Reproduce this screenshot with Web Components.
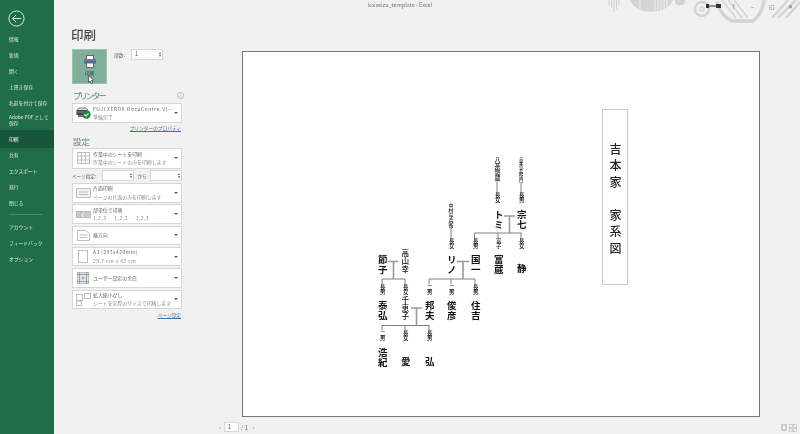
<!DOCTYPE html>
<html lang="ja">
<head>
<meta charset="utf-8">
<title>kaiseizu_template - Excel</title>
<style>
html, body { margin: 0; padding: 0; height: 100%; overflow: hidden; }
body { font-family: "Noto Sans CJK JP", "Noto Sans", sans-serif; background: #f0f1f0; }
</style>
</head>
<body>
<excel-backstage>
  <back-nav slot="nav">
    <nav-item>情報</nav-item>
    <nav-item>新規</nav-item>
    <nav-item>開く</nav-item>
    <nav-item>上書き保存</nav-item>
    <nav-item>名前を付けて保存</nav-item>
    <nav-item tall>Adobe PDF として<br>保存</nav-item>
    <nav-item active>印刷</nav-item>
    <nav-item>共有</nav-item>
    <nav-item>エクスポート</nav-item>
    <nav-item>発行</nav-item>
    <nav-item>閉じる</nav-item>
    <nav-sep></nav-sep>
    <nav-item>アカウント</nav-item>
    <nav-item>フィードバック</nav-item>
    <nav-item>オプション</nav-item>
  </back-nav>
  <print-panel slot="panel">
    <drop-row style="height:20px">
      <svg slot="icon" width="15" height="12" viewBox="0 0 15 12"><path d="M1 3l2-2h7l2 2" fill="#ddd" stroke="#555" stroke-width=".7"/><rect x="0.5" y="3" width="11" height="5" fill="#444"/><path d="M1 5h10" stroke="#bbb" stroke-width=".6"/><rect x="2" y="8" width="8" height="2" fill="#777"/><circle cx="10.5" cy="7.5" r="4.2" fill="#1f8a3f"/><path d="M8.5 7.5l1.5 1.5L12.5 6.3" fill="none" stroke="#fff" stroke-width="1.1"/></svg>
      <span slot="main" style="letter-spacing:.6px">FUJI XEROX DocuCentre-VI…</span>
      <span slot="sub">準備完了</span>
    </drop-row>
  </print-panel>
  <print-preview slot="preview"></print-preview>
</excel-backstage>

<script>
"use strict"

const FONT = '"Noto Sans CJK JP", "Noto Sans", sans-serif';

class ExcelBackstage extends HTMLElement {
 constructor() {
  super();
  this.attachShadow({ mode: 'open' }).innerHTML = `
   <style>
    :host { display: flex; width: 800px; height: 434px; position: relative; overflow: hidden; background: #f0f1f0; font-family: ${FONT}; filter: blur(.3px); }
    .title { position: absolute; left: 0; right: 0; top: 1px; padding-left: 0; text-align: center; font-size: 5.5px; line-height: 8px; color: #777; }
    .art { position: absolute; left: 600px; top: 0; }
    .win { position: absolute; top: 2px; right: 0; display: flex; align-items: center; height: 8px; font-size: 6px; color: #666; }
    .win span { width: 19px; text-align: center; }
   </style>
   <svg class="art" width="200" height="26" viewBox="600 0 200 26" fill="none" stroke="#d3d4d3">
    <g stroke-width="1.2"><path d="M609 0v5M611.5 0v8M614 0v12M616.5 0v9M619 0v5"/></g>
    <path d="M630 0h43a22 15 0 0 1-43 0z" fill="#d3d4d3" stroke="none"/>
    <g stroke="#f0f1f0" stroke-width="1"><path d="M640 0v14M655 0v15M658 0v14M661 0v13M664 0v12M667 0v9"/></g>
    <circle cx="680" cy="0" r="5.5" fill="#d3d4d3" stroke="none"/>
    <circle cx="702" cy="9" r="7" stroke-width="2.4"/>
    <circle cx="702" cy="9" r="2" stroke-width="1.5"/>
    <path d="M717 2q4 14 15 19h21q9-6 11-21" stroke-width="3.5"/>
    <path d="M722 0l14 18M728 0l14 18M734 0l14 18" stroke-width="1.5"/>
    <path d="M772 18L788 0M778 18L796 0M786 18L800 2" stroke-width="2.4"/>
   </svg>
   <div class="title">kaiseizu_template  -  Excel</div>
   <svg style="position:absolute;left:705px;top:3px" width="18" height="6" viewBox="0 0 18 6"><rect x="1" y="1" width="3" height="4" fill="#333"/><path d="M4 3h8" stroke="#333"/><rect x="11" y="1" width="5" height="4" fill="#333"/></svg>
   <div class="win"><span>?</span><span>–</span><span>◱</span><span>✕</span></div>
   <slot name="nav"></slot>
   <slot name="panel"></slot>
   <slot name="preview"></slot>`;
 }
}

class BackNav extends HTMLElement {
 constructor() {
  super();
  this.attachShadow({ mode: 'open' }).innerHTML = `
   <style>
    :host { display: flex; flex-direction: column; width: 54px; flex: none; height: 434px; background: #1f6e49; color: #e2eee8; }
    .back { height: 31px; padding: 7.5px 0 0 7.5px; box-sizing: border-box; flex: none; }
   </style>
   <div class="back">
    <svg width="17" height="17" viewBox="0 0 17 17" fill="none" stroke="#d8e8df" stroke-width="1"><circle cx="8.5" cy="8.5" r="7.6"/><path d="M13 8.5H4.5M8 5L4.5 8.5 8 12"/></svg>
   </div>
   <slot></slot>`;
 }
}

class NavItem extends HTMLElement {
 constructor() {
  super();
  this.attachShadow({ mode: 'open' }).innerHTML = `
   <style>
    :host { display: flex; align-items: center; height: 16px; flex: none; padding-left: 9px; font-size: 4.8px; line-height: 6.5px; white-space: nowrap; color: #dfece5; }
    :host([tall]) { height: 20px; margin-top: -1px; margin-bottom: 1px; }
    :host([active]) { height: 18px; margin-top: -1px; margin-bottom: -1px; background: #17563a; color: #fff; }
   </style>
   <span><slot></slot></span>`;
 }
}

class NavSep extends HTMLElement {
 constructor() {
  super();
  this.attachShadow({ mode: 'open' }).innerHTML = `
   <style>
    :host { display: block; height: 1px; flex: none; margin: 3px 11px 4px 9px; background: #4b8b6c; }
   </style>`;
 }
}

class DropRow extends HTMLElement {
 constructor() {
  super();
  this.attachShadow({ mode: 'open' }).innerHTML = `
   <style>
    :host { display: flex; align-items: center; width: 110px; height: 20px; box-sizing: border-box; flex: none; background: #fff; border: 1px solid #d6d8d6; color: #666; font-size: 4.9px; line-height: 8.5px; white-space: nowrap; }
    .icon { width: 20px; display: flex; justify-content: center; flex: none; }
    .text { flex: 1; min-width: 0; overflow: hidden; display: flex; flex-direction: column; }
    .sub { color: #8a8a8a; }
    .arrow { width: 0; height: 0; margin: 0 3px 0 2px; flex: none; border: 2px solid transparent; border-top: 2.5px solid #555; border-bottom: 0; }
   </style>
   <div class="icon"><slot name="icon"></slot></div>
   <div class="text"><div><slot name="main"></slot></div><div class="sub"><slot name="sub"></slot></div></div>
   <div class="arrow"></div>`;
 }
}

class SpinBox extends HTMLElement {
 constructor() {
  super();
  this.attachShadow({ mode: 'open' }).innerHTML = `
   <style>
    :host { display: flex; align-items: center; justify-content: space-between; box-sizing: border-box; height: 11px; background: #fff; border: 1px solid #d6d8d6; padding: 0 1px 0 3px; font-size: 5.5px; color: #555; }
    .sp { display: flex; flex-direction: column; gap: 1px; }
    .sp i { display: block; width: 0; height: 0; border: 1.5px solid transparent; }
    .u { border-bottom: 2px solid #555 !important; border-top: 0 !important; }
    .d { border-top: 2px solid #555 !important; border-bottom: 0 !important; }
   </style>
   <span><slot></slot></span>
   <div class="sp"><i class="u"></i><i class="d"></i></div>`;
 }
}

class PrintPanel extends HTMLElement {
 constructor() {
  super();
  this.attachShadow({ mode: 'open' }).innerHTML = `
   <style>
    :host { display: block; width: 110px; flex: none; margin-left: 18px; color: #555; }
    h1 { font: 500 12.5px/20px ${FONT}; margin: 25px 0 4px -1px; color: #444; height: 20px; }
    .top { display: flex; height: 35px; }
    .btn { width: 35px; height: 35px; box-sizing: border-box; background: #80b09b; border: 1px solid #9cc3b2; display: flex; flex-direction: column; align-items: center; padding-top: 5px; position: relative; font-size: 4.7px; color: #244; line-height: 7px; }
    .btn svg.c { position: absolute; left: 15px; top: 25px; }
    .copies { display: flex; align-items: flex-start; margin-left: 7px; gap: 3px; font-size: 4.8px; line-height: 11px; color: #666; }
    .copies span { width: 14px; }
    spin-box { width: 32px; }
    h2 { font: 400 8.5px/13px ${FONT}; margin: 0; color: #5a8a75; display: flex; justify-content: space-between; align-items: center; height: 13px; padding-left: 1px; }
    h2 .i { width: 5px; height: 5px; border: 1px solid #bbb; border-radius: 50%; font: 4px/5px "Liberation Sans", sans-serif; color: #999; text-align: center; margin-right: -2px; }
    .link { text-align: right; font-size: 4.7px; line-height: 8px; color: #3f72a8; text-decoration: underline; height: 8px; padding-right: 1px; }
    .stack { display: flex; flex-direction: column; gap: 1.8px; }
    .range { display: flex; align-items: center; height: 11px; font-size: 4.6px; color: #666; white-space: nowrap; }
    .range spin-box { width: 32px; flex: none; }
   </style>
   <h1>印刷</h1>
   <div class="top">
    <div class="btn">
     <svg width="14" height="13" viewBox="0 0 14 13"><rect x="3.5" y="0.5" width="7" height="4" fill="#fff" stroke="#667"/><rect x="1" y="4" width="12" height="5" fill="#6d7d8d"/><rect x="1" y="6" width="12" height="1.4" fill="#3a6ea8"/><rect x="3.5" y="8" width="7" height="4.5" fill="#fff" stroke="#667"/></svg>
     <div style="margin-top:2px">印刷</div>
     <svg class="c" width="6" height="9" viewBox="0 0 6 9"><path d="M.5.5v7l1.7-1.5L3.4 8.5 4.6 8 3.5 5.3 5.6 5z" fill="#fff" stroke="#222" stroke-width=".6"/></svg>
    </div>
    <div class="copies"><span>部数:</span><spin-box>1</spin-box></div>
   </div>
   <h2 style="margin-top:5px"><span style="letter-spacing:-2.2px">プリンター</span><span class="i">i</span></h2>
   <div style="margin-top:1px"><slot></slot></div>
   <div class="link" style="margin-top:1px">プリンターのプロパティ</div>
   <h2 style="margin-top:3px">設定</h2>
   <div class="stack" id="settings"></div>
   <div class="link" style="margin-top:1.5px">ページ設定</div>`;
 }
 connectedCallback() {
  const stroke = 'fill="none" stroke="#aab0ac" stroke-width=".8"';
  const rows = [
   [`<svg width="13" height="12" viewBox="0 0 13 12" ${stroke}><path d="M.5 .5h12v11H.5zM.5 4h12M.5 8h12M4.5.5v11M8.5.5v11"/></svg>`, '作業中のシートを印刷', '作業中のシートのみを印刷します', 20.5],
   null,
   [`<svg width="15" height="12" viewBox="0 0 15 12" ${stroke}><rect x=".5" y="1.5" width="14" height="9" rx=".5" fill="#f2f2f2"/><path d="M3 5h9M3 7.5h9"/></svg>`, '片面印刷', 'ページの片面のみを印刷します', 19.5],
   [`<svg width="15" height="10" viewBox="0 0 17 10" ${stroke}><rect x=".5" y="2" width="7" height="7" fill="#ccc"/><rect x="5" y="3" width="6" height="6" fill="#ddd"/><rect x="10" y="2" width="6.5" height="7" fill="#ccc"/></svg>`, '部単位で印刷', '<span style="letter-spacing:.5px">1,2,3&nbsp;&nbsp;&nbsp;&nbsp;&nbsp;1,2,3&nbsp;&nbsp;&nbsp;&nbsp;&nbsp;1,2,3</span>', 19.5],
   [`<svg width="13" height="11" viewBox="0 0 13 11" ${stroke}><path d="M.5.5h8l4 3v7H.5zM2.5 5h8M2.5 7.5h8"/></svg>`, '横方向', '', 19.5],
   [`<svg width="10" height="13" viewBox="0 0 10 13" ${stroke}><rect x=".5" y=".5" width="9" height="12" fill="#fff"/></svg>`, '<span style="letter-spacing:.5px">A3 (297x420mm)</span>', '<span style="letter-spacing:.5px">29.7 cm x 42 cm</span>', 19.5],
   [`<svg width="12" height="12" viewBox="0 0 12 12" ${stroke}><rect x=".5" y=".5" width="11" height="11" fill="#dfe6ee"/><path d="M2.5 0v12M9.5 0v12M0 2.5h12M0 9.5h12" stroke="#7f93a8"/><path d="M6 4l.7 1.5L8.2 6l-1.5.7L6 8.2l-.7-1.5L3.8 6l1.5-.5z" fill="#e8a33a" stroke="none"/></svg>`, 'ユーザー設定の余白', '', 19.5],
   [`<svg width="15" height="13" viewBox="0 0 15 13" ${stroke}><rect x=".5" y="1.5" width="6" height="6"/><rect x="8.5" y=".5" width="6" height="5"/><rect x=".5" y="8" width="5" height="4.5"/></svg>`, '拡大縮小なし', 'シートを実際のサイズで印刷します', 19.5]
  ];
  const box = this.shadowRoot.getElementById('settings');
  for (const r of rows) {
   if (!r) {
    const range = document.createElement('div');
    range.className = 'range';
    range.innerHTML = '<span style="width:30px">ページ指定:</span><spin-box></spin-box><span style="width:16px;text-align:center">から</span><spin-box></spin-box>';
    box.appendChild(range);
    continue;
   }
   const row = document.createElement('drop-row');
   row.style.height = r[3] + 'px';
   row.innerHTML = `<span slot="icon" style="display:flex">${r[0]}</span><span slot="main">${r[1]}</span>` + (r[2] ? `<span slot="sub">${r[2]}</span>` : '');
   box.appendChild(row);
  }
 }
}

class PrintPreview extends HTMLElement {
 constructor() {
  super();
  this.attachShadow({ mode: 'open' }).innerHTML = `
   <style>
    :host { display: flex; flex-direction: column; flex: 1; min-width: 0; padding: 51px 40px 0 60px; box-sizing: border-box; height: 434px; }
    .pager { display: flex; align-items: center; height: 11px; margin: 4.5px 0 0 -23px; font-size: 6px; color: #777; }
    .pager .box { width: 15px; height: 10px; box-sizing: border-box; margin: 0 2px 0 3px; background: #fff; border: 1px solid #d6d8d6; padding-left: 3px; line-height: 8px; color: #555; }
    .zoom { position: absolute; right: 3px; top: 424px; display: flex; gap: 2px; }
   </style>
   <family-sheet></family-sheet>
   <div class="pager"><span>‹</span><span class="box">1</span><span>/ 1</span><span style="margin-left:5px">›</span></div>
   <div class="zoom">
    <svg width="6" height="7" viewBox="0 0 6 7"><rect width="6" height="7" fill="#c5ccd3"/><rect x="2" y="2" width="2" height="3" fill="#fff"/></svg>
    <svg width="8" height="8" viewBox="0 0 8 8"><rect width="8" height="8" fill="#ccc"/><path d="M1 1l2 2M7 1L5 3M1 7l2-2M7 7L5 5" stroke="#fff" stroke-width="1.2"/></svg>
   </div>`;
 }
}

// nodes of the family tree, in screenshot coordinates: x centre, y top, font px, height, text, bold
const PAGE_X = 242, PAGE_Y = 51;
const TREE_NODES = [
 [521, 157, 4.2, 25, '吉本宗兵衛門'], [497, 157, 6, 24, '八茶惣蔵'], [451, 203, 5, 25, '中村与兵衛'],
 [521, 192, 5.4, 11, '長男'], [497, 192, 5.4, 11, '長女'], [451, 238, 5.4, 11, '長女'],
 [521, 210, 9.5, 19, '宗七', 1], [498, 210, 9.5, 19, 'トミ', 1],
 [475, 238, 5.4, 11, '長男'], [498, 238, 5.4, 11, '富子'], [521, 238, 5.4, 11, '長女'],
 [451, 255, 9.5, 19, 'リノ', 1], [475, 255, 9.5, 19, '国一', 1], [498, 255, 9.5, 19, '富蔵', 1], [521, 264, 9.5, 9.5, '静', 1],
 [382, 255, 9.5, 19, '節子', 1], [405, 249, 7.6, 24, '高山幸'],
 [382, 284, 5.4, 11, '長男'], [405, 284, 5.4, 11, '長女'], [429, 284, 5.4, 11, '二男'], [451, 284, 5.4, 11, '二男'], [475, 284, 5.4, 11, '長男'],
 [382, 301, 9.5, 19, '泰弘', 1], [405, 296, 7.6, 24, '千恵子'], [429, 301, 9.5, 19, '邦夫', 1], [451, 301, 9.5, 19, '俊彦', 1], [475, 301, 9.5, 19, '住吉', 1],
 [382, 330, 5.4, 11, '二男'], [405, 330, 5.4, 11, '長女'], [429, 330, 5.4, 11, '長男'],
 [382, 348, 9.5, 19, '浩紀', 1], [405, 357, 9.5, 9.5, '愛', 1], [429, 357, 9.5, 9.5, '弘', 1]
];
const TREE_BRANCHES = [
 'M521 182v10M497 182v10M451 228v10',
 'M474.5 233h47M474.5 233v5M498 233v5M521 233v5',
 'M429 279h46M429 279v5M451 279v5M475 279v5',
 'M382 279h23M382 279v5M405 279v5',
 'M382 325.5h47M382 325v5M405 325v5M429 325v5'
];
const TREE_COUPLES = [
 'M504 216h11M509.5 216v17',
 'M457 261.5h12M463 261.5v17.5',
 'M388 261.5h10M393.5 261.5v17.5',
 'M411 308h11M416.5 308v17'
];

class FamilySheet extends HTMLElement {
 constructor() {
  super();
  const nodes = TREE_NODES.map(([x, y, fs, h, t, b]) => {
   const spacing = Math.max(0, (h - fs * t.length) / t.length);
   return `<span class="n" style="left:${x - PAGE_X - 1 - fs / 2}px;top:${y - PAGE_Y - 1}px;font-size:${fs}px;letter-spacing:${spacing.toFixed(2)}px;font-weight:${b ? 700 : 500}">${t}</span>`;
  }).join('');
  this.attachShadow({ mode: 'open' }).innerHTML = `
   <style>
    :host { display: block; position: relative; width: 518px; height: 366px; box-sizing: border-box; background: #fff; border: 1px solid #777; flex: none; font-family: ${FONT}; color: #111; }
    .n { position: absolute; writing-mode: vertical-rl; text-orientation: upright; line-height: 1; white-space: nowrap; }
    .cap { position: absolute; left: ${602 - PAGE_X - 1}px; top: ${109 - PAGE_Y - 1}px; width: 26px; height: 176px; box-sizing: border-box; border: 1px solid #ccc; display: flex; justify-content: center; padding-top: 33px; }
    .cap span { writing-mode: vertical-rl; text-orientation: upright; font: 500 12px/1 "Noto Sans CJK JP", serif; letter-spacing: 4.5px; white-space: pre; color: #222; }
    svg { position: absolute; left: ${-PAGE_X - 1}px; top: ${-PAGE_Y - 1}px; }
   </style>
   <svg width="800" height="434" fill="none">
    <path d="${TREE_BRANCHES.join('')}" stroke="#808080" stroke-width="1"/>
    <path d="${TREE_COUPLES.join('')}" stroke="#999" stroke-width="1.6"/>
   </svg>
   <div class="cap"><span>吉本家　家系図</span></div>
   ${nodes}`;
 }
}

customElements.define('excel-backstage', ExcelBackstage);
customElements.define('back-nav', BackNav);
customElements.define('nav-item', NavItem);
customElements.define('nav-sep', NavSep);
customElements.define('drop-row', DropRow);
customElements.define('spin-box', SpinBox);
customElements.define('print-panel', PrintPanel);
customElements.define('print-preview', PrintPreview);
customElements.define('family-sheet', FamilySheet);
</script>
</body>
</html>
